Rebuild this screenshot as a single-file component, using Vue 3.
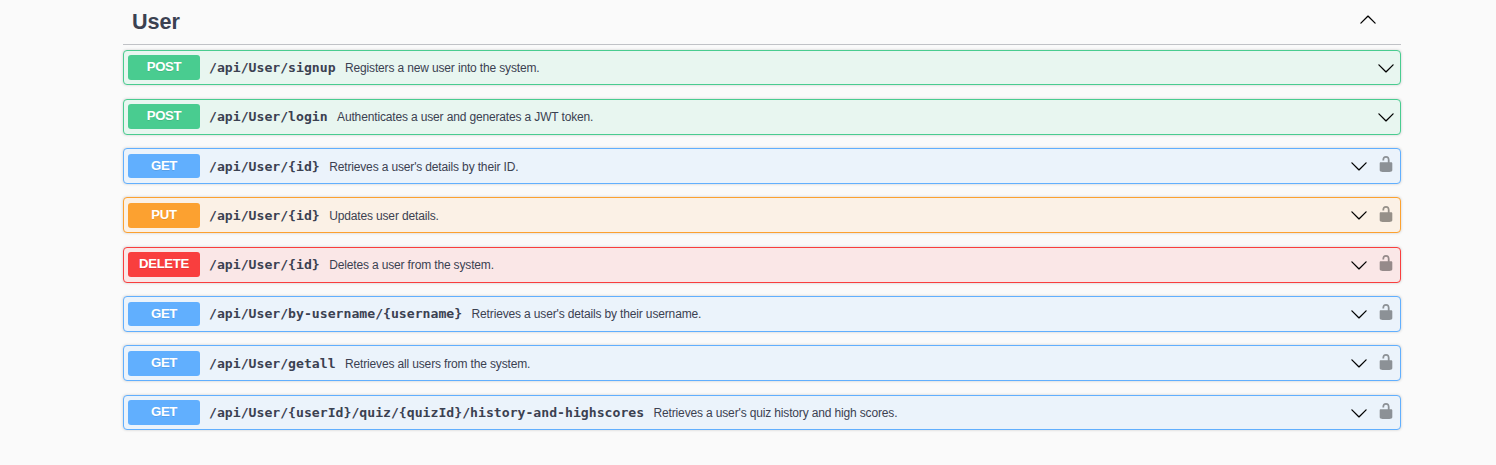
<script setup>
import { ref } from 'vue'

const open = ref(true)
const operations = [
  { method: 'post', path: '/api/User/signup', summary: 'Registers a new user into the system.', locked: false },
  { method: 'post', path: '/api/User/login', summary: 'Authenticates a user and generates a JWT token.', locked: false },
  { method: 'get', path: '/api/User/{id}', summary: "Retrieves a user's details by their ID.", locked: true },
  { method: 'put', path: '/api/User/{id}', summary: 'Updates user details.', locked: true },
  { method: 'delete', path: '/api/User/{id}', summary: 'Deletes a user from the system.', locked: true },
  { method: 'get', path: '/api/User/by-username/{username}', summary: "Retrieves a user's details by their username.", locked: true },
  { method: 'get', path: '/api/User/getall', summary: 'Retrieves all users from the system.', locked: true },
  { method: 'get', path: '/api/User/{userId}/quiz/{quizId}/history-and-highscores', summary: "Retrieves a user's quiz history and high scores.", locked: true },
]
</script>

<template>
  <main class="page">
    <header class="tag" @click="open = !open">
      <h3 class="tag-name">User</h3>
      <svg class="icon" :class="{ flipped: open }" viewBox="0 0 20 20">
        <path d="M17.418 6.109c.272-.268.709-.268.979 0s.271.701 0 .969l-7.908 7.83c-.27.268-.707.268-.979 0l-7.908-7.83c-.27-.268-.27-.701 0-.969.271-.268.709-.268.979 0L10 13.25l7.418-7.141z" />
      </svg>
    </header>
    <section v-if="open" class="list">
      <div v-for="op in operations" :key="op.method + op.path" class="op" :class="op.method">
        <span class="method">{{ op.method.toUpperCase() }}</span>
        <span class="path">{{ op.path }}</span>
        <span class="summary">{{ op.summary }}</span>
        <svg class="icon" viewBox="0 0 20 20">
          <path d="M17.418 6.109c.272-.268.709-.268.979 0s.271.701 0 .969l-7.908 7.83c-.27.268-.707.268-.979 0l-7.908-7.83c-.27-.268-.27-.701 0-.969.271-.268.709-.268.979 0L10 13.25l7.418-7.141z" />
        </svg>
        <svg v-if="op.locked" class="icon lock" viewBox="0 0 20 20">
          <path d="M15.8 8H14V5.6C14 2.703 12.665 1 10 1 7.334 1 6 2.703 6 5.6V6h2v-.801C8 3.754 8.797 3 10 3c1.203 0 2 .754 2 2.199V8H4c-.553 0-1 .646-1 1.199V17c0 .549.428 1.139.951 1.307l1.197.387C5.672 18.861 6.55 19 7.1 19h5.8c.549 0 1.428-.139 1.951-.307l1.196-.387c.524-.167.953-.757.953-1.306V9.199C17 8.646 16.352 8 15.8 8z" />
        </svg>
      </div>
    </section>
  </main>
</template>

<style>
body {
  background: #fafafa;
}
</style>

<style scoped>
.page {
  box-sizing: border-box;
  width: 1278px;
  height: 465px;
  margin-left: 123px;
  color: #3b4151;
  font-family: "Liberation Sans", Arial, sans-serif;
}
.tag {
  box-sizing: border-box;
  display: flex;
  align-items: center;
  justify-content: space-between;
  height: 45px;
  padding: 0 24px 4px 9px;
  border-bottom: 1px solid rgba(59, 65, 81, 0.3);
  cursor: pointer;
}
.tag-name {
  margin: 0;
  padding-top: 3px;
  font-size: 21.6px;
  line-height: 28px;
  font-weight: 700;
}
.icon {
  flex: none;
  width: 18px;
  height: 18px;
  fill: #000;
}
.flipped {
  transform: rotate(180deg);
}
.list {
  display: flex;
  flex-direction: column;
  gap: 13.46875px;
  padding-top: 4.625px;
}
.op {
  box-sizing: border-box;
  display: flex;
  align-items: center;
  height: 35.8125px;
  padding: 4.5px;
  padding-right: 5px;
  border: 1px solid;
  border-radius: 4px;
  box-shadow: 0 0 3px rgba(0, 0, 0, 0.19);
}
.method {
  flex: none;
  width: 72px;
  height: 24.77px;
  margin-left: -0.5px;
  border-radius: 3px;
  color: #fff;
  font-size: 13.2px;
  font-weight: 700;
  line-height: 23.6px;
  letter-spacing: -0.35px;
  text-align: center;
  text-shadow: 0 1px 0 rgba(0, 0, 0, 0.1);
}
.path {
  margin-left: 9px;
  font-family: "DejaVu Sans Mono", monospace;
  font-size: 13.15px;
  font-weight: 700;
  white-space: nowrap;
}
.summary {
  flex: 1;
  margin-left: 9.4px;
  padding-top: 1px;
  font-size: 12px;
  letter-spacing: -0.15px;
  white-space: nowrap;
}
.lock {
  margin-left: 9px;
  margin-bottom: 3.4px;
  opacity: 0.4;
}
.post { border-color: #49cc90; background: #e8f6f0; }
.post .method { background: #49cc90; }
.get { border-color: #61affe; background: #ebf3fb; }
.get .method { background: #61affe; }
.put { border-color: #fca130; background: #fbf1e6; }
.put .method { background: #fca130; }
.delete { border-color: #f93e3e; background: #fae7e7; }
.delete .method { background: #f93e3e; }
</style>
